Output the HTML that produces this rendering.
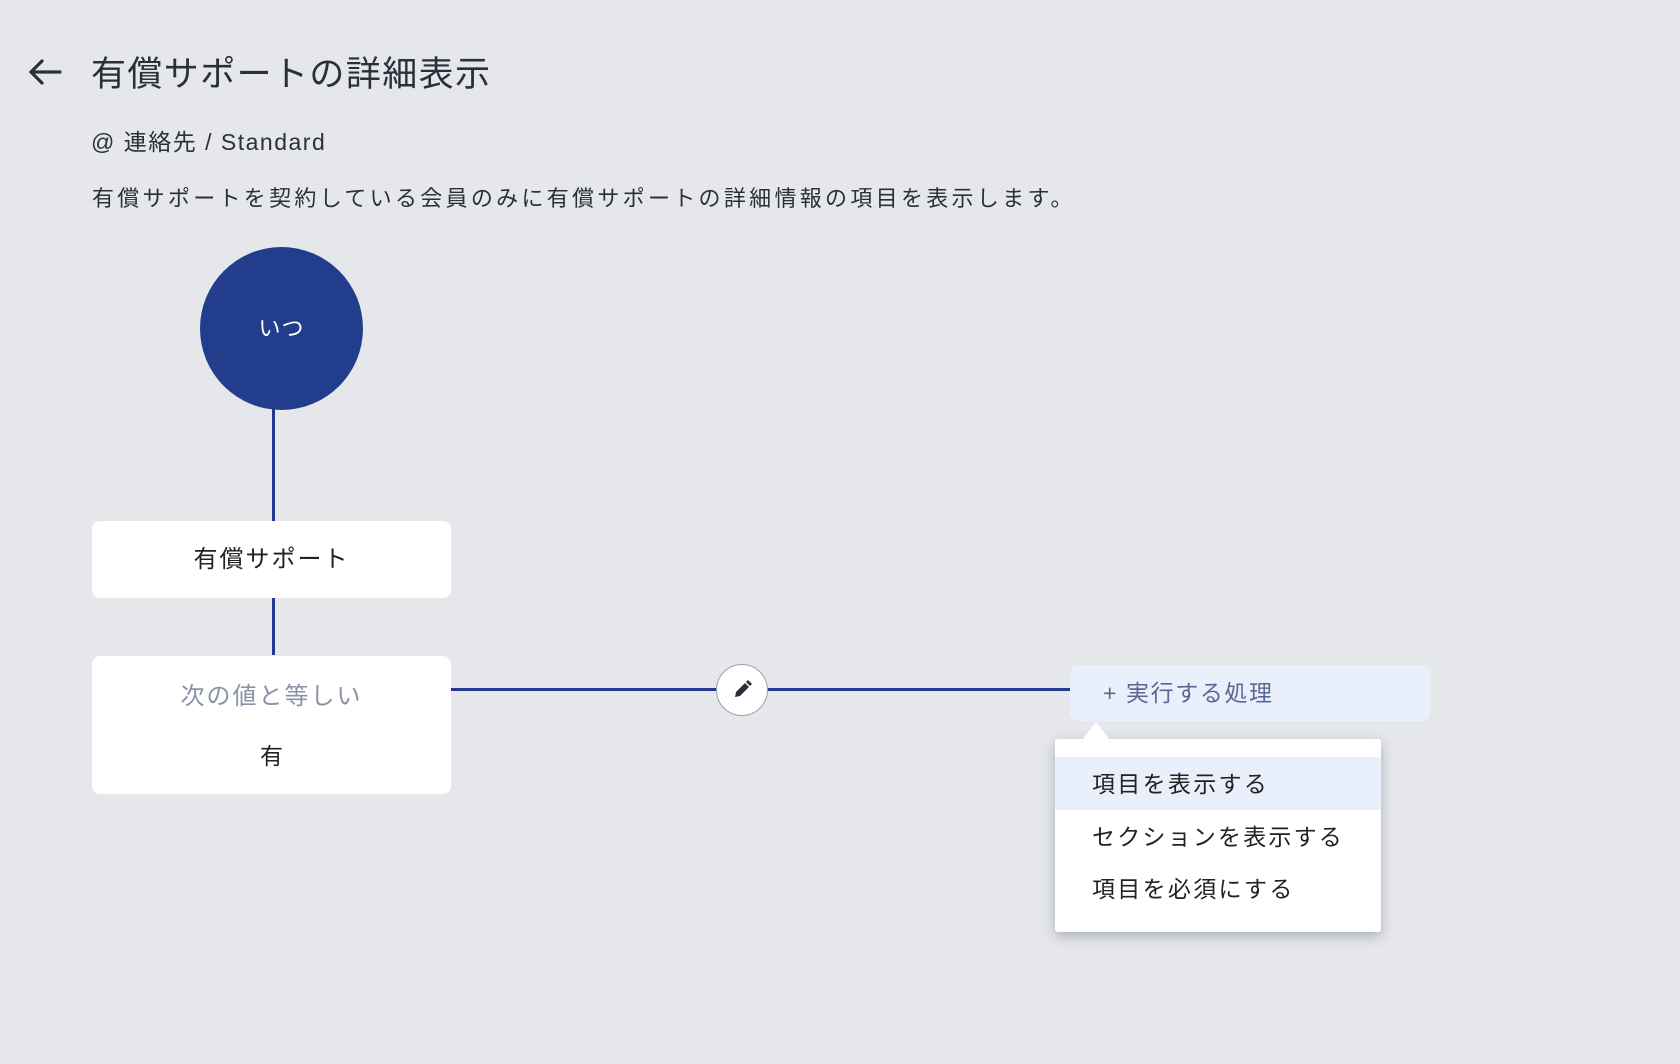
<!DOCTYPE html>
<html><head><meta charset="utf-8"><style>
*{margin:0;padding:0;box-sizing:border-box}
body{width:1680px;height:1064px;background:#e5e7ea;font-family:"Liberation Sans","Noto Sans CJK JP",sans-serif;color:#2a2f3a;position:relative;overflow:hidden}
.a{position:absolute}
.box{background:#fff;border-radius:8px;position:absolute;text-align:center}
</style></head><body>
<svg class="a" style="left:26px;top:56px" width="38" height="32" viewBox="0 0 38 32"><path d="M34 16H5M16 5L5 16l11 11" fill="none" stroke="#2a2f3a" stroke-width="3.2" stroke-linecap="round" stroke-linejoin="round"/></svg>
<div class="a" style="left:91px;top:53px;font-size:35px;line-height:44px;letter-spacing:1.4px">有償サポートの詳細表示</div>
<div class="a" style="left:91px;top:127px;font-size:23px;line-height:30px;letter-spacing:1.5px">@ 連絡先 / Standard</div>
<div class="a" style="left:92px;top:185px;font-size:22px;line-height:28px;letter-spacing:3.3px">有償サポートを契約している会員のみに有償サポートの詳細情報の項目を表示します。</div>
<div class="a" style="left:272px;top:400px;width:3px;height:255px;background:#25398a"></div>
<div class="a" style="left:200px;top:247px;width:163px;height:163px;border-radius:50%;background:#223d8c;color:#fff;font-size:22px;line-height:163px;text-align:center;letter-spacing:1px">いつ</div>
<div class="box" style="left:92px;top:521px;width:359px;height:77px;font-size:24px;line-height:77px;color:#222;letter-spacing:2px">有償サポート</div>
<div class="box" style="left:92px;top:656px;width:359px;height:138px">
<div style="font-size:24px;color:#8a92a6;margin-top:20px;letter-spacing:2px">次の値と等しい</div>
<div style="font-size:23px;color:#222;margin-top:26px">有</div></div>
<div class="a" style="left:451px;top:688px;width:620px;height:3px;background:#25398a"></div>
<div class="a" style="left:716px;top:664px;width:52px;height:52px;border-radius:50%;background:#fff;border:1.5px solid #9aa0ab"></div>
<svg class="a" style="left:730px;top:678px" width="24" height="24" viewBox="0 0 24 24"><path d="M5 19l1-5 9-9 4 4-9 9z" fill="#2a2f3a"/><path d="M16 4l2-2 4 4-2 2z" fill="#2a2f3a"/></svg>
<div class="a" style="left:1070px;top:665px;width:360px;height:56px;border-radius:8px;background:#e9f0fb;color:#5a6795;font-size:23px;line-height:56px;padding-left:33px;letter-spacing:1.6px">+ 実行する処理</div>
<div class="a" style="left:1055px;top:739px;width:326px;height:193px;background:#fff;border-radius:3px;box-shadow:0 4px 12px rgba(60,70,90,.35)"></div>
<div class="a" style="left:1082px;top:722px;width:0;height:0;border-left:14px solid transparent;border-right:14px solid transparent;border-bottom:18px solid #fff"></div>
<div class="a" style="left:1055px;top:757px;width:326px;height:53px;background:#e9f0fb"></div>
<div class="a" style="left:1092px;top:768px;font-size:23px;line-height:32px;color:#222;letter-spacing:2.3px">項目を表示する</div>
<div class="a" style="left:1092px;top:821px;font-size:23px;line-height:32px;color:#222;letter-spacing:2.2px">セクションを表示する</div>
<div class="a" style="left:1092px;top:873px;font-size:23px;line-height:32px;color:#222;letter-spacing:2.3px">項目を必須にする</div>
</body></html>
